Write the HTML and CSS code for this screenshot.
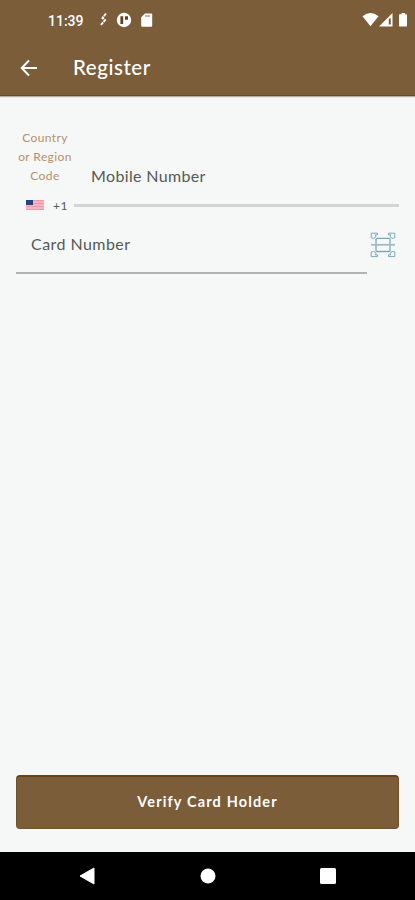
FILE: index.html
```html
<!DOCTYPE html>
<html lang="en">
<head>
  <meta charset="utf-8">
  <meta name="viewport" content="width=device-width, initial-scale=1">
  <title>Register</title>
  <link rel="stylesheet" href="styles.css">
</head>
<body>
  <div class="screen">
    <header class="top">
      <div class="status-bar">
        <span class="time">11:39</span>
        <svg class="status-left" width="58" height="16" viewBox="0 0 58 16">
          <path d="M8 1.5L4.5 6L7 8.2L2.5 13.5" fill="none" stroke="#fff" stroke-width="2" stroke-dasharray="3.2 .8"/>
          <circle cx="26" cy="8" r="7.2" fill="#fff"/>
          <path d="M22.4 4.3h2.8v7.6h-2.8zM27 4.3h3v3.4h-3z" fill="#65401f"/>
          <path d="M47 1.5h6.2a1 1 0 0 1 1 1v11.2a1 1 0 0 1-1 1h-9a1 1 0 0 1-1-1V5.3z" fill="#fff"/>
          <path d="M47 3h5v2h-5z" fill="#c6b7a6"/>
        </svg>
        <svg class="status-right" width="46" height="16" viewBox="0 0 46 16">
          <path d="M0.5 4.2Q8.5 -2 16.5 4.2L8.5 14.3z" fill="#fff"/>
          <path d="M30.5 1v13.5H17z" fill="#fff"/>
          <path d="M26.8 6.5h2v6h-2z" fill="#7d5e3a"/>
          <path d="M39.5 1h3.5v1.3h1.3q.7 0 .7.7v10.8q0 .7-.7.7h-6.6q-.7 0-.7-.7V3q0-.7.7-.7h1.8z" fill="#fff"/>
        </svg>
      </div>
      <div class="app-bar">
        <svg class="back" width="18" height="18" viewBox="0 0 18 18">
          <path d="M17 9H2M9 1.5L1.7 9L9 16.5" fill="none" stroke="#fff" stroke-width="2"/>
        </svg>
        <h1 class="title">Register</h1>
      </div>
    </header>

    <main class="content">
      <div class="phone-row">
        <div class="country">
          <div class="country-label">Country<br>or Region<br>Code</div>
          <div class="country-value">
            <svg class="flag" width="18" height="10" viewBox="0 0 18 10">
              <path d="M0 0h18v10H0z" fill="#f7b5bd"/>
              <path d="M0 .5h18M0 3.5h18M0 6.5h18M0 9.5h18" stroke="#ee9ba5"/>
              <path d="M0 0h7v5H0z" fill="#24437f"/>
            </svg>
            <span class="dial">+1</span>
          </div>
        </div>
        <div class="mobile">
          <div class="field-label mobile-label">Mobile Number</div>
        </div>
      </div>

      <div class="card-row">
        <div class="card-field">
          <div class="field-label card-label">Card Number</div>
        </div>
        <svg class="scan" width="26" height="26" viewBox="0 0 26 26" fill="none" stroke="#7aaabd">
          <rect x="6" y="6.3" width="14" height="13.2" rx="1" stroke-width="1.3"/>
          <path d="M1 12.8h24" stroke="#9dbdc8" stroke-width="1.8"/>
          <path d="M7.5 1.2H1.2v4.6q2.6 1.2 4-.3t0-2.6H7.5zM18.5 1.2h6.3v4.6q-2.6 1.2-4-.3t0-2.6H18.5zM7.5 24.6H1.2V20q2.6-1.2 4 .3t0 2.6H7.5zM18.5 24.6h6.3V20q-2.6-1.2-4 .3t0 2.6H18.5z"/>
        </svg>
      </div>

      <button class="verify" type="button">Verify Card Holder</button>
    </main>

    <nav class="nav-bar">
      <svg width="16" height="18" viewBox="0 0 16 18"><path d="M15 1v16L1 9z" fill="#fff" stroke="#fff" stroke-linejoin="round"/></svg>
      <svg width="16" height="16" viewBox="0 0 16 16"><circle cx="8" cy="8" r="7.5" fill="#fff"/></svg>
      <svg width="16" height="16" viewBox="0 0 16 16"><rect width="16" height="16" rx="1.5" fill="#fff"/></svg>
    </nav>
  </div>
</body>
</html>
```

FILE: styles.css
```css
:root {
  --brown: #7c5d39;
  --bg: #f5f8f7;
  --label: #b98f6c;
  --text: #555958;
}

* {
  margin: 0;
  padding: 0;
  box-sizing: border-box;
}

body {
  background: var(--bg);
  font-family: Lato, sans-serif;
}

.screen {
  height: 900px;
  display: flex;
  flex-direction: column;
}

.top {
  height: 96px;
  background: var(--brown);
  border-bottom: 1px solid #6b4a24;
  box-shadow: 0 1px 1px #b5ada3;
  color: #fff;
}

.status-bar {
  height: 40px;
  padding: 0 7px 0 48px;
  display: flex;
  align-items: center;
}

.time {
  width: 50px;
  padding-top: 2px;
  font: 500 14px/20px Roboto, sans-serif;
}

.status-right {
  margin-left: auto;
}

.app-bar {
  height: 55px;
  padding-left: 20px;
  display: flex;
  align-items: center;
}

.title {
  margin: -2px 0 0 35px;
  font-size: 20.5px;
  font-weight: 500;
  line-height: 26px;
  letter-spacing: 0.55px;
}

.content {
  flex: 1;
  padding: 32px 16px 23px;
  display: flex;
  flex-direction: column;
}

.phone-row {
  height: 91px;
  display: flex;
}

.country {
  width: 58px;
}

.country-label {
  color: var(--label);
  font-size: 12px;
  line-height: 19px;
  letter-spacing: 0.4px;
  text-align: center;
}

.country-value {
  height: 20px;
  margin-top: 10px;
  padding-left: 10px;
  display: flex;
  align-items: center;
  gap: 9px;
}

.dial {
  color: var(--text);
  font-size: 12px;
  letter-spacing: 0.5px;
}

.mobile {
  flex: 1;
  height: 79px;
  padding: 38px 0 0 17px;
  border-bottom: 3px solid #d3d5d4;
}

.field-label {
  color: var(--text);
  font-size: 16px;
  line-height: 20px;
  letter-spacing: 0.45px;
}

.mobile-label {
  letter-spacing: 0.35px;
}

.card-row {
  display: flex;
}

.card-field {
  width: 351px;
  height: 55px;
  padding: 15px 0 0 15px;
  border-bottom: 2px solid #b1b3b2;
}

.scan {
  margin: 13px 0 0 3px;
}

.verify {
  height: 54px;
  margin-top: auto;
  padding-bottom: 2px;
  background: var(--brown);
  border: 1px solid #745229;
  border-top: 2px solid #6b430f;
  border-radius: 4px;
  color: #fff;
  font: 700 14.5px/20px Lato, sans-serif;
  letter-spacing: 1.15px;
}

.nav-bar {
  height: 48px;
  padding: 0 79px;
  background: #000;
  display: flex;
  align-items: center;
  justify-content: space-between;
}
```
